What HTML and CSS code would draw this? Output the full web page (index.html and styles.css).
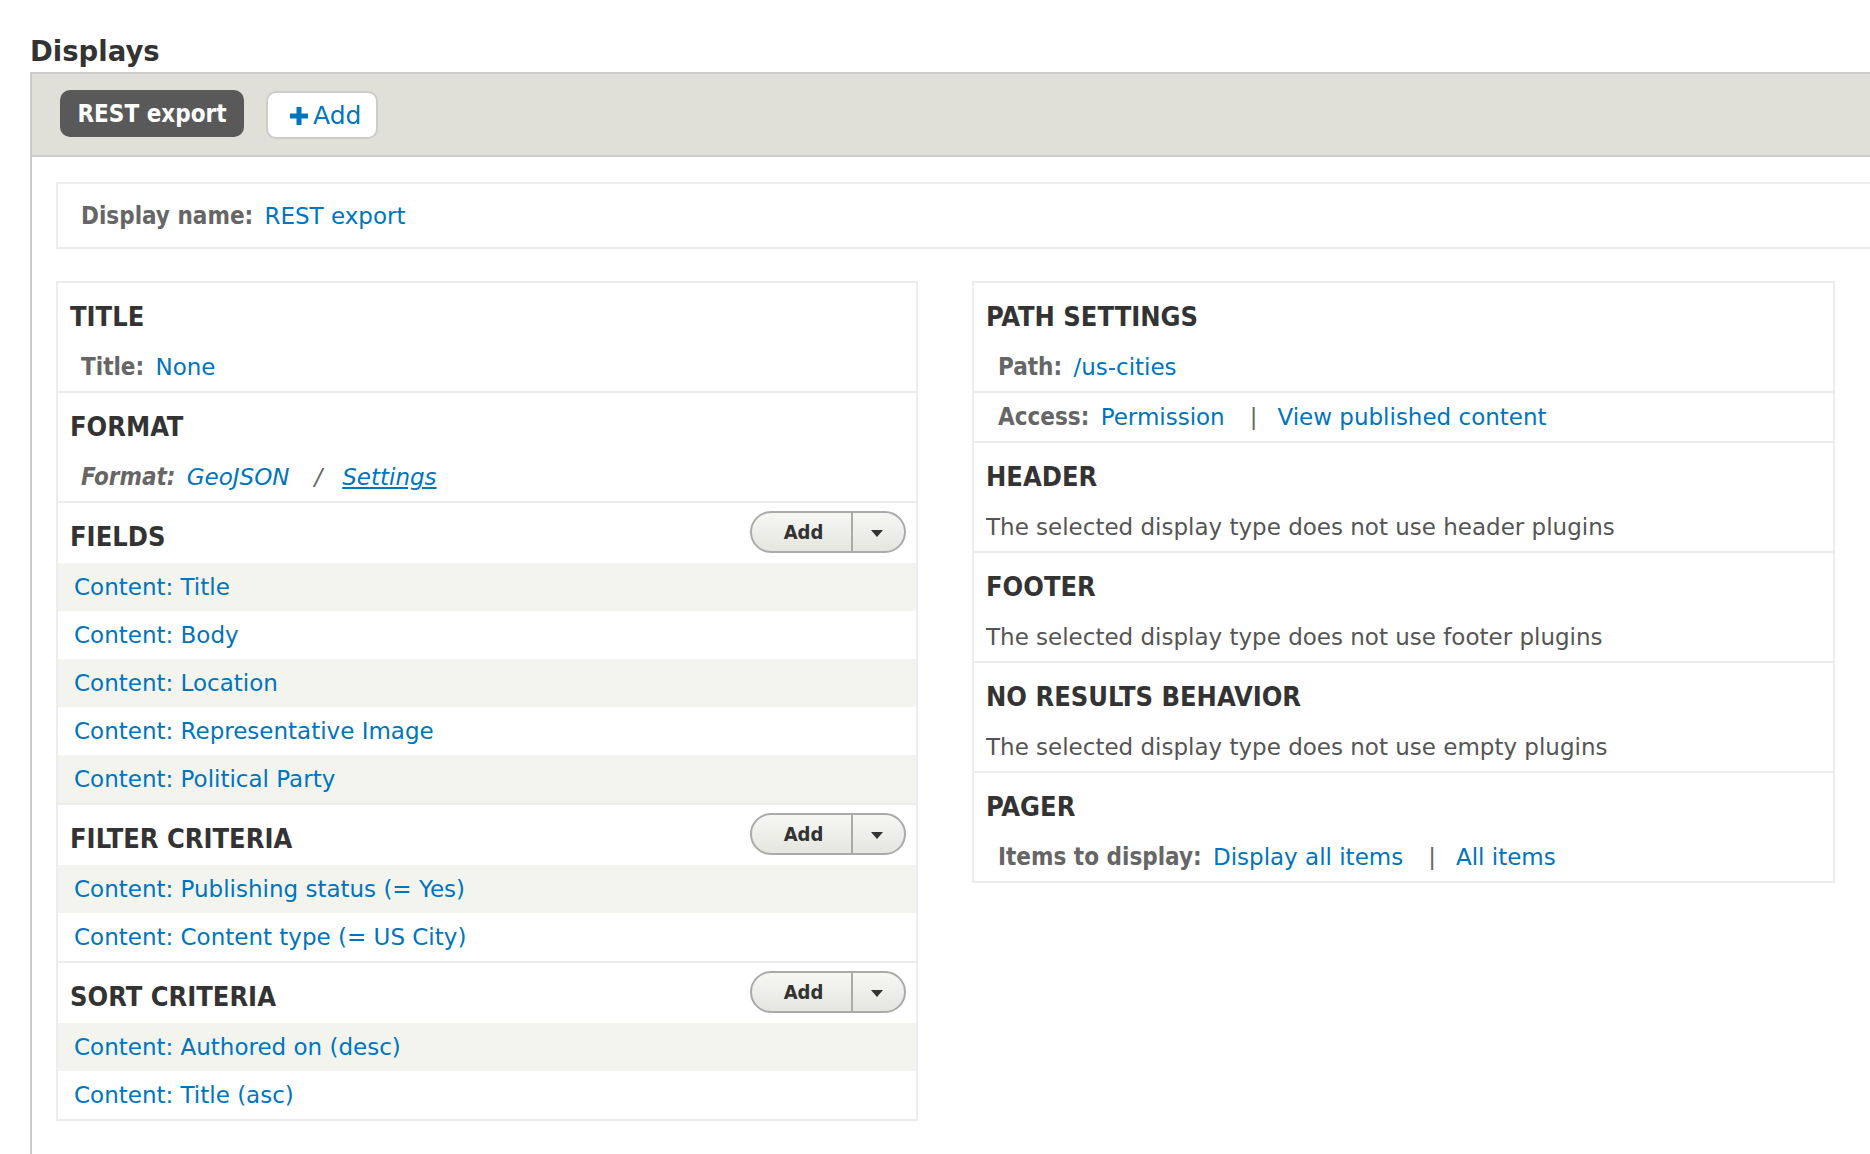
FILE: index.html
```html
<!DOCTYPE html>
<html lang="en">
<head>
<meta charset="utf-8">
<title>Displays</title>
<link rel="stylesheet" href="styles.css">
</head>
<body>
<h1 class="page-title">Displays</h1>
<div class="displays">
  <div class="tabs">
    <span class="tab tab-active">REST export</span>
    <a class="tab tab-add" href="#"><svg class="plus" viewBox="0 0 18 18" width="18" height="18" aria-hidden="true"><path d="M6.5 0h5v6.5H18v5h-6.5V18h-5v-6.5H0v-5h6.5z" fill="#0074bd"/></svg>Add</a>
  </div>
  <div class="display-body">
    <div class="display-name"><span class="label">Display name:</span> <a href="#">REST export</a></div>
    <div class="columns">
      <div class="column">
        <section class="sec">
          <div class="sec-head"><h3>TITLE</h3></div>
          <div class="row setting"><span class="label">Title:</span> <a href="#">None</a></div>
        </section>
        <section class="sec">
          <div class="sec-head"><h3>FORMAT</h3></div>
          <div class="row setting italic"><span class="label">Format:</span> <a href="#">GeoJSON</a><span class="sep">/</span><a href="#" class="u">Settings</a></div>
        </section>
        <section class="sec">
          <div class="sec-head"><h3>FIELDS</h3>
            <div class="dropbutton"><span class="db-main">Add</span><span class="db-toggle"><span class="arrow"></span></span></div>
          </div>
          <div class="row item odd"><a href="#">Content: Title</a></div>
          <div class="row item"><a href="#">Content: Body</a></div>
          <div class="row item odd"><a href="#">Content: Location</a></div>
          <div class="row item"><a href="#">Content: Representative Image</a></div>
          <div class="row item odd"><a href="#">Content: Political Party</a></div>
        </section>
        <section class="sec">
          <div class="sec-head"><h3>FILTER CRITERIA</h3>
            <div class="dropbutton"><span class="db-main">Add</span><span class="db-toggle"><span class="arrow"></span></span></div>
          </div>
          <div class="row item odd"><a href="#">Content: Publishing status (= Yes)</a></div>
          <div class="row item"><a href="#">Content: Content type (= US City)</a></div>
        </section>
        <section class="sec">
          <div class="sec-head"><h3>SORT CRITERIA</h3>
            <div class="dropbutton"><span class="db-main">Add</span><span class="db-toggle"><span class="arrow"></span></span></div>
          </div>
          <div class="row item odd"><a href="#">Content: Authored on (desc)</a></div>
          <div class="row item"><a href="#">Content: Title (asc)</a></div>
        </section>
      </div>
      <div class="column">
        <section class="sec">
          <div class="sec-head"><h3>PATH SETTINGS</h3></div>
          <div class="row setting-r"><span class="label">Path:</span> <a href="#">/us-cities</a></div>
          <div class="row setting-r bordered"><span class="label">Access:</span> <a href="#">Permission</a><span class="sep">|</span><a href="#">View published content</a></div>
        </section>
        <section class="sec">
          <div class="sec-head"><h3>HEADER</h3></div>
          <div class="row desc">The selected display type does not use header plugins</div>
        </section>
        <section class="sec">
          <div class="sec-head"><h3>FOOTER</h3></div>
          <div class="row desc">The selected display type does not use footer plugins</div>
        </section>
        <section class="sec">
          <div class="sec-head"><h3>NO RESULTS BEHAVIOR</h3></div>
          <div class="row desc">The selected display type does not use empty plugins</div>
        </section>
        <section class="sec">
          <div class="sec-head"><h3>PAGER</h3></div>
          <div class="row setting-r"><span class="label">Items to display:</span> <a href="#">Display all items</a><span class="sep">|</span><a href="#">All items</a></div>
        </section>
      </div>
    </div>
  </div>
</div>
</body>
</html>
```

FILE: styles.css
```css
html, body {
  margin: 0;
  padding: 0;
}

body {
  font-family: "DejaVu Sans", Verdana, sans-serif;
  color: #333;
  background: #fff;
  overflow: hidden;
  height: 1154px;
}

a {
  color: #0074bd;
  text-decoration: none;
}

.page-title {
  margin: 0;
  padding: 35px 0 5px 30px;
  font-size: 27.5px;
  line-height: 32px;
  font-weight: bold;
  color: #333;
}

.displays {
  margin-left: 30px;
  width: 1900px;
  height: 1082px;
  box-sizing: border-box;
  border-left: 2px solid #ccc;
}

.tabs {
  display: flex;
  align-items: flex-start;
  gap: 22px;
  height: 81px;
  padding-left: 28px;
  background: #e0e0d8;
  border-top: 2px solid #ccc;
  border-bottom: 2px solid #ccc;
}

.tab {
  display: flex;
  align-items: center;
  box-sizing: border-box;
  border-radius: 10px;
}

.tab-active {
  margin-top: 16px;
  height: 47px;
  width: 184px;
  justify-content: center;
  background: #595959;
  color: #fff;
  font-family: "DejaVu Sans Condensed", "DejaVu Sans", sans-serif;
  font-stretch: condensed;
  font-size: 24px;
  font-weight: bold;
}

.tab-add {
  margin-top: 17px;
  height: 48px;
  padding: 0 15px 0 22px;
  background: #fff;
  border: 2px solid #ccc;
  font-size: 25px;
  color: #0074bd;
}

.plus {
  margin-right: 5px;
  margin-top: 1px;
}

.display-body {
  padding: 25px 0 0 24px;
}

.display-name {
  border: 2px solid #ededed;
  height: 63px;
  box-sizing: content-box;
  padding: 0 0 0 23px;
  font-size: 23px;
  line-height: 61px;
}

.display-name .label,
.display-name a {
  display: inline-block;
  padding-top: 2px;
}

.label {
  font-family: "DejaVu Sans Condensed", "DejaVu Sans", sans-serif;
  font-stretch: condensed;
  font-weight: bold;
  font-size: 24px;
  color: #666;
  margin-right: 4px;
}

.columns {
  margin-top: 32px;
  display: grid;
  grid-template-columns: 862px 863px;
  column-gap: 54px;
  align-items: start;
}

.column {
  border: 2px solid #ededed;
}

.sec + .sec {
  border-top: 2px solid #ededed;
}

.sec-head {
  display: flex;
  align-items: flex-start;
  justify-content: space-between;
  box-sizing: border-box;
  height: 60px;
  padding: 7px 10px 0 12px;
}

.sec-head h3 {
  margin: 0;
  font-family: "DejaVu Sans Condensed", "DejaVu Sans", sans-serif;
  font-stretch: condensed;
  font-size: 27px;
  line-height: 53px;
  font-weight: bold;
  color: #333;
}

.dropbutton {
  margin-top: 1px;
  display: flex;
  box-sizing: border-box;
  width: 156px;
  height: 42px;
  border: 2px solid #aaa;
  border-radius: 21px;
  background: linear-gradient(#f6f6f3, #e6e6e0);
  overflow: hidden;
}

.db-main {
  width: 101px;
  display: flex;
  align-items: center;
  justify-content: center;
  padding-left: 4px;
  box-sizing: border-box;
  font-family: "DejaVu Sans Condensed", "DejaVu Sans", sans-serif;
  font-stretch: condensed;
  font-size: 20px;
  font-weight: bold;
  color: #333;
  border-right: 2px solid #aaa;
}

.db-toggle {
  flex: 1;
  display: flex;
  align-items: center;
  justify-content: center;
  padding-right: 4px;
}

.arrow {
  width: 0;
  height: 0;
  border-left: 6px solid transparent;
  border-right: 6px solid transparent;
  border-top: 7px solid #333;
  margin-top: 2px;
}

.row {
  height: 48px;
  line-height: 48px;
  font-size: 23px;
  white-space: nowrap;
}

.item {
  padding-left: 16px;
}

.odd {
  background: #f3f4ee;
}

.setting {
  padding-left: 23px;
}

.setting-r {
  padding-left: 24px;
}

.bordered {
  border-top: 2px solid #ededed;
}

.italic {
  font-style: italic;
}

.u {
  text-decoration: underline;
}

.sep {
  color: #666;
  margin: 0 20px 0 25px;
}

.desc {
  padding-left: 12px;
  color: #555;
}
```
